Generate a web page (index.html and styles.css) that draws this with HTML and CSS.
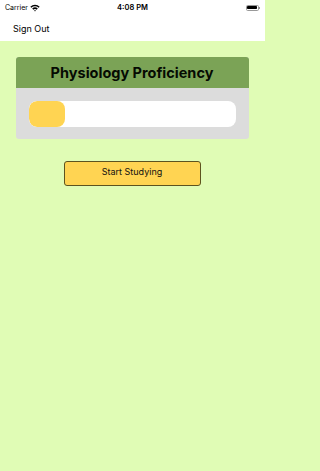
FILE: index.html
```html
<!DOCTYPE html>
<html>
<head>
<meta charset="utf-8">
<link rel="stylesheet" href="styles.css">
</head>
<body>
<div class="screen">
<div class="top">
  <div class="status">
    <div class="left">
      <span class="carrier">Carrier</span>
      <svg class="wifi" width="10" height="8" viewBox="0 0 10 8">
        <path d="M0.3 2.7 A6.8 6.8 0 0 1 9.7 2.7 L8.6 3.8 A5.2 5.2 0 0 0 1.4 3.8 Z" fill="#000"/>
        <path d="M2.2 4.6 A4.1 4.1 0 0 1 7.8 4.6 L6.7 5.7 A2.5 2.5 0 0 0 3.3 5.7 Z" fill="#000"/>
        <path d="M4.1 6.5 A1.3 1.3 0 0 1 5.9 6.5 L5 7.5 Z" fill="#000"/>
      </svg>
    </div>
    <span class="time">4:08 PM</span>
    <div class="right">
      <div class="battery"><div class="level"></div></div>
      <div class="nub"></div>
    </div>
  </div>
  <div class="nav"><span class="signout">Sign Out</span></div>
</div>
<main class="content">
  <section class="card">
    <h1 class="card-title">Physiology Proficiency</h1>
    <div class="card-body">
      <div class="track"><div class="fill" style="width:36px"></div></div>
    </div>
  </section>
  <button class="start">Start Studying</button>
</main>
</div>
</body>
</html>
```
FILE: styles.css
```css
* { box-sizing: border-box; }
html, body { margin: 0; padding: 0; height: 100%; }
html { background: #e0fcb5; }
body {
  font-family: Inter, "Liberation Sans", sans-serif;
  background: #e0fcb5;
}
.screen {
  width: 265px;
  height: 100%;
  display: flex;
  flex-direction: column;
}
.top { background: #fff; height: 41px; }
.status {
  height: 15px;
  display: flex;
  align-items: center;
  justify-content: space-between;
  padding: 0 5px;
  position: relative;
}
.left { display: flex; align-items: center; gap: 2px; }
.carrier { font-size: 7px; color: #000; }
.time {
  position: absolute; left: 0; right: 0; text-align: center;
  font-size: 7.5px; font-weight: 600;
}
.right { display: flex; align-items: center; }
.battery {
  width: 13px; height: 6px; border: 0.8px solid #999; border-radius: 1.6px; padding: 0.7px;
}
.level { width: 100%; height: 100%; background: #000; border-radius: 0.8px; }
.nub { width: 1px; height: 2px; background: #999; margin-left: 0.4px; }
.nav { height: 26px; display: flex; align-items: center; padding-left: 13px; }
.signout { font-size: 9px; color: #000; }
.content {
  flex: 1;
  display: flex;
  flex-direction: column;
  align-items: center;
  padding-top: 16px;
}
.card {
  width: 233px;
  margin-left: -1px;
  background: #dcdcdc;
  border-radius: 3px;
  overflow: hidden;
}
.card-title {
  margin: 0;
  height: 31px;
  background: #7ba356;
  display: flex; align-items: center; justify-content: center;
  font-size: 14.5px; font-weight: 700; color: #050a02;
}
.card-body { padding: 13px 13px 12px 13px; }
.track {
  height: 26px; background: #fff; border-radius: 8px; overflow: hidden;
}
.fill { height: 100%; background: #ffd452; border-radius: 8px; }
.start {
  margin-top: 22px;
  width: 137px; height: 25px;
  background: #ffd452;
  border: 1px solid #5d531f;
  border-radius: 3px;
  font-family: Inter, "Liberation Sans", sans-serif;
  font-size: 9px; color: #111;
  padding: 0 0 4px 0;
  margin-left: -1px;
}
```
